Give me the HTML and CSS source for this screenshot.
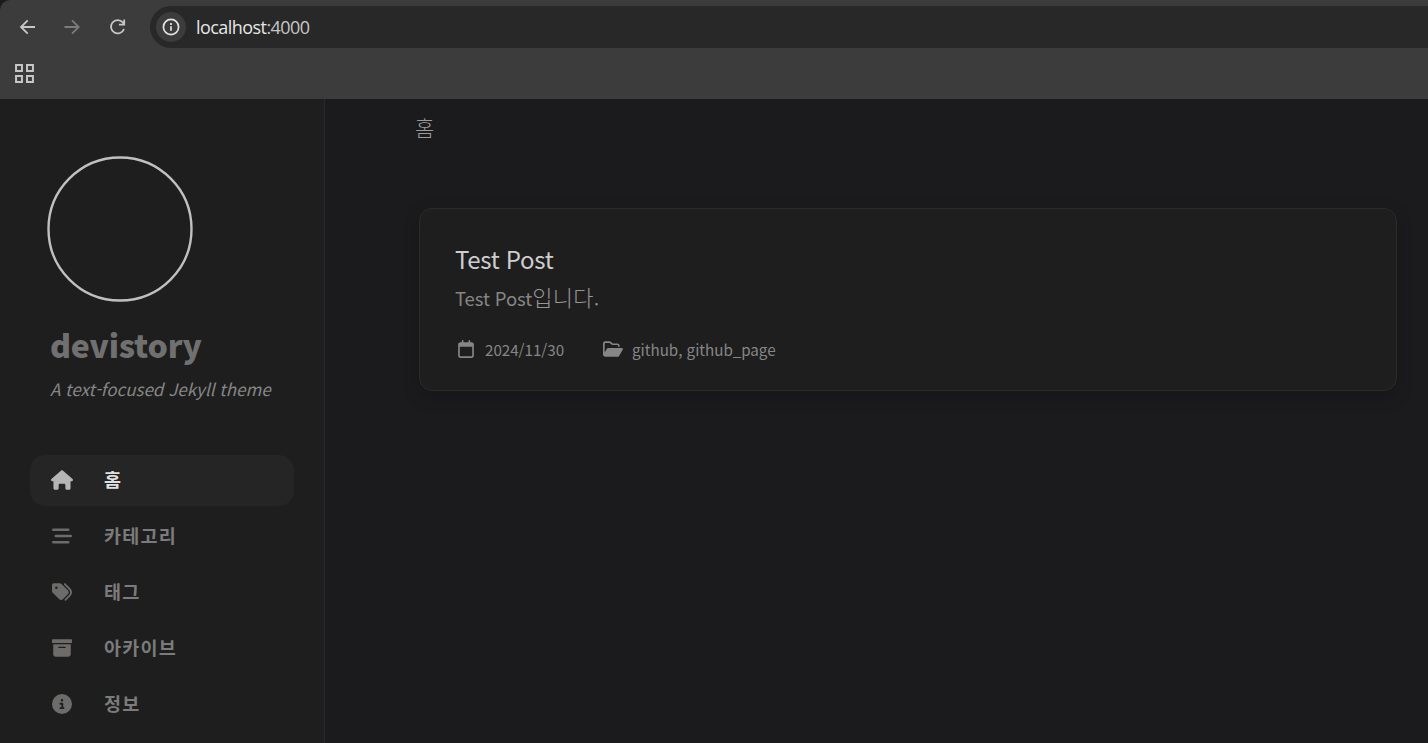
FILE: index.html
```html
<!DOCTYPE html>
<html lang="ko">
<head>
<meta charset="utf-8">
<title>devistory</title>
<link rel="stylesheet" href="styles.css">
</head>
<body>
<header class="browser">
  <div class="toolbar">
    <svg class="tool" viewBox="0 0 20 20"><path d="M18 10H4M10.7 3.3L4 10l6.700 6.700"/></svg>
    <svg class="tool tool-off" viewBox="0 0 20 20"><path d="M2.500 10h14M10 3.300l6.700 6.700-6.700 6.700"/></svg>
    <svg class="tool" viewBox="0 0 20 20"><path d="M17 12A6.700 6.700 0 1 1 15.800 5.400L17.200 7.100M17.200 2.500v5.200h-5.200"/></svg>
    <div class="omnibox">
      <span class="site-info"><svg viewBox="0 0 20 20"><circle cx="10" cy="10" r="7.6"/><path d="M10 9.200v4.600M10 6.100v1.800"/></svg></span>
      <span class="url">localhost<span class="port">:4000</span></span>
    </div>
  </div>
  <div class="bookmarks">
    <svg class="apps" viewBox="0 0 18 18"><path d="M1 1h5.600v5.600H1zM11.400 1H17v5.600h-5.600zM1 11.400h5.600V17H1zM11.400 11.400H17V17h-5.600z"/></svg>
  </div>
</header>
<div class="page">
  <aside class="sidebar">
    <svg class="avatar" viewBox="0 0 146 146"><circle cx="73" cy="73" r="71.500"/></svg>
    <h1 class="site-title">devistory</h1>
    <p class="tagline">A text-focused Jekyll theme</p>
    <nav class="nav">
      <a class="nav-item active"><svg viewBox="0 0 576 512"><path d="M575.8 255.500c0 18-15 32.100-32 32.100h-32l.7 160.200c0 2.700-.2 5.400-.5 8.100V472c0 22.100-17.900 40-40 40H416c-22.100 0-40-17.900-40-40v-88c0-17.700-14.300-32-32-32H232c-17.700 0-32 14.300-32 32v88c0 22.100-17.900 40-40 40h-56c-22.100 0-40-17.900-40-40V287.600H32c-18 0-32-14-32-32.100 0-9 3-17 10-24L266.400 8c7-7 15-8 22-8s15 2 21 7l255.400 224.500c8 7 12 15 11 24z"/></svg><span>홈</span></a>
      <a class="nav-item"><svg viewBox="0 0 512 512"><path d="M32 64h384a32 32 0 0 1 0 64H32a32 32 0 0 1 0-64zM96 224h384a32 32 0 0 1 0 64H96a32 32 0 0 1 0-64zM32 384h384a32 32 0 0 1 0 64H32a32 32 0 0 1 0-64z"/></svg><span>카테고리</span></a>
      <a class="nav-item"><svg viewBox="0 0 512 512"><path d="M345 39.100L472.800 168.400c52.400 53 52.400 138.200 0 191.200L360.800 472.900c-9.300 9.400-24.500 9.500-33.900 .2s-9.500-24.500-.2-33.900L438.600 325.900c33.900-34.300 33.900-89.400 0-123.700L310.900 72.900c-9.300-9.400-9.200-24.600 .2-33.900s24.600-9.200 33.900 .2zM0 229.500V80C0 53.500 21.500 32 48 32H197.500c17 0 33.300 6.700 45.300 18.700l168 168c25 25 25 65.500 0 90.500L277.300 442.700c-25 25-65.500 25-90.500 0l-168-168C6.700 262.700 0 246.500 0 229.500zM144 144a32 32 0 1 0 -64 0 32 32 0 1 0 64 0z"/></svg><span>태그</span></a>
      <a class="nav-item"><svg viewBox="0 0 512 512"><path d="M16 32H496c8.800 0 16 7.200 16 16V112c0 8.800-7.200 16-16 16H16C7.200 128 0 120.800 0 112V48C0 39.200 7.200 32 16 32zm16 128H480V416c0 35.300-28.700 64-64 64H96c-35.300 0-64-28.700-64-64V160zm128 80c0 8.800 7.200 16 16 16H336c8.800 0 16-7.200 16-16s-7.200-16-16-16H176c-8.800 0-16 7.200-16 16z"/></svg><span>아카이브</span></a>
      <a class="nav-item"><svg viewBox="0 0 512 512"><path d="M256 512A256 256 0 1 0 256 0a256 256 0 1 0 0 512zM216 336h24V272H216c-13.300 0-24-10.700-24-24s10.700-24 24-24h48c13.300 0 24 10.700 24 24v88h8c13.300 0 24 10.700 24 24s-10.700 24-24 24H216c-13.300 0-24-10.700-24-24s10.700-24 24-24zm40-208a32 32 0 1 1 0 64 32 32 0 1 1 0-64z"/></svg><span>정보</span></a>
    </nav>
  </aside>
  <main class="main">
    <div class="breadcrumb">홈</div>
    <article class="card">
      <h2 class="card-title">Test Post</h2>
      <p class="card-text">Test Post<span class="ko">입니다.</span></p>
      <div class="meta">
        <svg class="cal" viewBox="0 0 448 512"><path d="M152 24c0-13.300-10.700-24-24-24s-24 10.700-24 24V64H64C28.700 64 0 92.700 0 128v320c0 35.300 28.700 64 64 64H384c35.300 0 64-28.700 64-64V128c0-35.300-28.700-64-64-64H344V24c0-13.300-10.700-24-24-24s-24 10.700-24 24V64H152V24zM48 192H400V448c0 8.800-7.200 16-16 16H64c-8.800 0-16-7.200-16-16V192z"/></svg>
        <span class="date">2024/11/30</span>
        <svg class="folder" viewBox="0 0 576 512"><path d="M384 480h48c11.400 0 21.900-6 27.600-15.900l112-192c5.800-9.900 5.800-22.100 .1-32.100S555.500 224 544 224H144c-11.400 0-21.900 6-27.600 15.900L48 357.100V96c0-8.800 7.200-16 16-16H181.500c4.200 0 8.300 1.700 11.300 4.700l26.500 26.500c21 21 49.500 32.800 79.200 32.800H416c8.800 0 16 7.200 16 16v32h48V160c0-35.300-28.700-64-64-64H298.500c-17 0-33.300-6.700-45.300-18.700L226.700 50.700c-12-12-28.300-18.700-45.300-18.700H64C28.700 32 0 60.700 0 96V416c0 35.300 28.700 64 64 64H384z"/></svg>
        <span class="cats">github, github_page</span>
      </div>
    </article>
  </main>
</div>
</body>
</html>
```
FILE: styles.css
```css
* { box-sizing: border-box; }
body {
  margin: 0;
  height: 743px;
  overflow: hidden;
  display: flex;
  flex-direction: column;
  background: #1b1b1e;
  color: #868686;
  font-family: "Noto Sans CJK KR", sans-serif;
}
h1, h2, p { margin: 0; }

.browser { height: 99px; flex: none; background: #3c3c3c; border-top-left-radius: 10px; }
.toolbar { display: flex; align-items: center; height: 48px; padding: 6px 0 0 17px; }
.tool { width: 20px; height: 20px; margin-right: 25px; fill: none; stroke: #c7c7c7; stroke-width: 1.8; }
.tool-off { stroke: #7b7b7b; }
.omnibox {
  flex: 1;
  height: 42px;
  margin-left: -2px;
  padding-left: 6px;
  display: flex;
  align-items: center;
  gap: 10px;
  background: #282828;
  border-radius: 21px 0 0 21px;
}
.site-info { width: 30px; height: 30px; border-radius: 50%; background: #3c3c3c; display: grid; place-items: center; }
.site-info svg { width: 20px; height: 20px; fill: none; stroke: #e3e3e3; stroke-width: 1.7; }
.url { font: 18px/24px "Open Sans", sans-serif; letter-spacing: -0.56px; color: #e6e6e6; }
.port { color: #c7c7c7; }
.bookmarks { padding: 16px 0 0 15px; }
.apps { display: block; width: 19px; height: 19px; fill: none; stroke: #c7c7c7; stroke-width: 1.9; }

.page { flex: 1; display: flex; min-height: 0; }
.sidebar { width: 325px; background: #1e1e1e; border-right: 1px solid #29292b; padding: 57px 30px 0; }
.avatar { display: block; width: 146px; height: 146px; margin-left: 17px; fill: none; stroke: #c0c0c0; stroke-width: 2.4; }
.site-title { margin: 19px 0 0 20px; font-size: 32px; line-height: 46px; font-weight: 900; letter-spacing: -0.2px; color: #717070; white-space: nowrap; }
.tagline { margin: 9px 0 0 20px; font-size: 17px; line-height: 26px; font-style: italic; letter-spacing: 0; color: #868686; white-space: nowrap; }
.nav { display: flex; flex-direction: column; gap: 5px; margin-top: 53px; }
.nav-item { display: flex; align-items: center; height: 51px; padding: 0 0 4px 21px; border-radius: 15px; font-size: 18.500px; font-weight: 700; letter-spacing: 1.2px; color: #7b7b7b; }
.nav-item svg { width: 22px; height: 20px; margin: 3px 31px 0 0; fill: #6d6c6b; }
.active { background: #252525; color: #e0e0e0; }
.active svg { fill: #b5b5b5; }

.main { flex: 1; padding: 13px 31px 0 94px; }
.breadcrumb { margin-left: -4px; font-size: 21px; line-height: 30px; font-weight: 300; color: #9a9a9a; }
.card {
  height: 183px;
  margin-top: 66px;
  padding: 32px 35px 0;
  border: 1px solid #2b2b2c;
  border-radius: 13px;
  background: #1e1e1e;
  box-shadow: 0 6px 18px rgba(0, 0, 0, .18);
}
.card-title { font-size: 24px; line-height: 36px; font-weight: 400; letter-spacing: -0.3px; color: #cecece; }
.card-text { font-size: 18.500px; line-height: 28px; margin-top: 5px; letter-spacing: -0.1px; }
.ko { font-weight: 300; font-size: 22px; letter-spacing: 0.3px; color: #969696; }
.meta { display: flex; align-items: center; height: 24px; margin-top: 25px; font-size: 15.200px; letter-spacing: -0.03px; }
.cal { width: 16px; height: 18px; margin-left: 3px; fill: #868686; }
.folder { width: 20px; height: 18px; margin-left: 39px; fill: #868686; }
.date { margin-left: 11px; }
.cats { margin-left: 9px; }
```
